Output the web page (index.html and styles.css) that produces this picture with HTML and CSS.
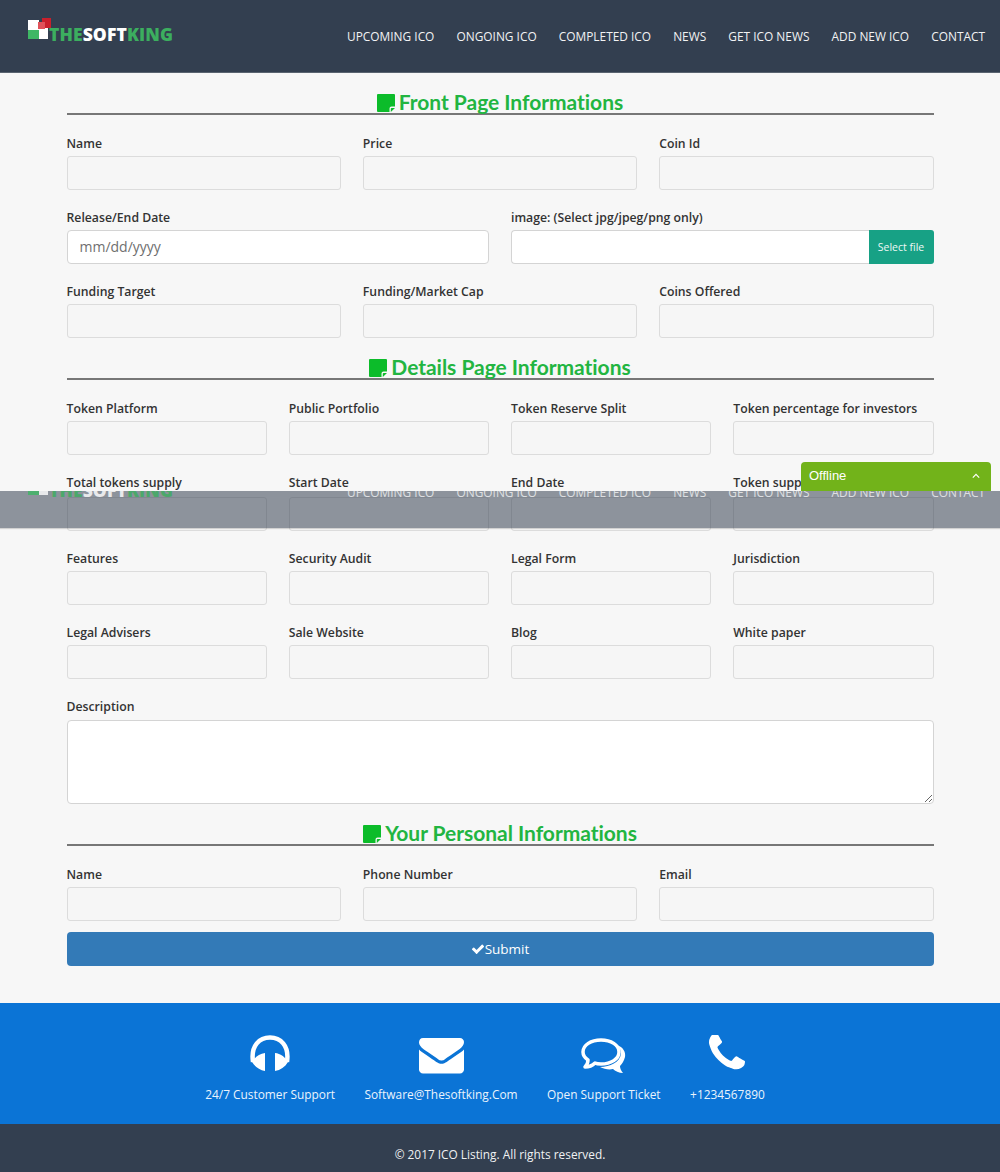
FILE: index.html
```html
<!DOCTYPE html>
<html lang="en">
<head>
<meta charset="utf-8">
<title>Add New ICO</title>
<link rel="stylesheet" href="styles.css">
</head>
<body>
<svg class="defs" width="0" height="0" aria-hidden="true">
  <symbol id="note" viewBox="0 0 18 18"><path d="M1 0h16a1 1 0 0 1 1 1v11.500h-3.500a2 2 0 0 0-2 2V18H1a1 1 0 0 1-1-1V1a1 1 0 0 1 1-1zM13.800 18v-3.200a.8.8 0 0 1 .8-.8H18z"/></symbol>
  <symbol id="mark" viewBox="0 0 24 23">
    <rect x="0" y="2" width="11" height="11" fill="#fff"/>
    <rect x="0" y="12" width="11" height="9" fill="#3fb765"/>
    <rect x="11" y="10" width="9" height="11" fill="#fff"/>
    <rect x="14" y="0" width="9" height="10" fill="#c9202c"/>
    <rect x="10" y="4" width="7" height="7" fill="#e0525a"/>
  </symbol>
</svg>

<header class="topbar">
  <a class="logo" href="#"><svg class="logo-mark"><use href="#mark"/></svg><span class="logo-text"><span class="g">THE</span>SOFT<span class="g">KING</span></span></a>
  <nav class="menu">
    <a href="#">Upcoming ICO</a><a href="#">Ongoing ICO</a><a href="#">Completed ICO</a><a href="#">News</a><a href="#">Get ICO News</a><a href="#">Add New ICO</a><a href="#">Contact</a>
  </nav>
</header>

<main class="page">
  <section class="block">
    <h2 class="block-title"><svg class="note"><use href="#note"/></svg><span>Front Page Informations</span></h2>
    <div class="rows">
      <div class="grid c3">
        <div class="field"><label>Name</label><input class="inp"></div>
        <div class="field"><label>Price</label><input class="inp"></div>
        <div class="field"><label>Coin Id</label><input class="inp"></div>
      </div>
      <div class="grid c2">
        <div class="field"><label>Release/End Date</label><input class="inp white date" placeholder="mm/dd/yyyy"></div>
        <div class="field"><label>image: (Select jpg/jpeg/png only)</label>
          <div class="file"><input class="inp white"><button class="file-btn" type="button">Select file</button></div>
        </div>
      </div>
      <div class="grid c3">
        <div class="field"><label>Funding Target</label><input class="inp"></div>
        <div class="field"><label>Funding/Market Cap</label><input class="inp"></div>
        <div class="field"><label>Coins Offered</label><input class="inp"></div>
      </div>
    </div>
  </section>

  <section class="block">
    <h2 class="block-title"><svg class="note"><use href="#note"/></svg><span>Details Page Informations</span></h2>
    <div class="rows">
      <div class="grid c4">
        <div class="field"><label>Token Platform</label><input class="inp"></div>
        <div class="field"><label>Public Portfolio</label><input class="inp"></div>
        <div class="field"><label>Token Reserve Split</label><input class="inp"></div>
        <div class="field"><label>Token percentage for investors</label><input class="inp"></div>
      </div>
      <div class="grid c4 loose">
        <div class="field"><label>Total tokens supply</label><input class="inp"></div>
        <div class="field"><label>Start Date</label><input class="inp"></div>
        <div class="field"><label>End Date</label><input class="inp"></div>
        <div class="field"><label>Token supply</label><input class="inp"></div>
      </div>
      <div class="grid c4">
        <div class="field"><label>Features</label><input class="inp"></div>
        <div class="field"><label>Security Audit</label><input class="inp"></div>
        <div class="field"><label>Legal Form</label><input class="inp"></div>
        <div class="field"><label>Jurisdiction</label><input class="inp"></div>
      </div>
      <div class="grid c4">
        <div class="field"><label>Legal Advisers</label><input class="inp"></div>
        <div class="field"><label>Sale Website</label><input class="inp"></div>
        <div class="field"><label>Blog</label><input class="inp"></div>
        <div class="field"><label>White paper</label><input class="inp"></div>
      </div>
      <div class="field"><label class="desc-label">Description</label><textarea class="desc"></textarea></div>
    </div>
  </section>

  <section class="block">
    <h2 class="block-title"><svg class="note"><use href="#note"/></svg><span>Your Personal Informations</span></h2>
    <div class="grid c3">
      <div class="field"><label>Name</label><input class="inp"></div>
      <div class="field"><label>Phone Number</label><input class="inp"></div>
      <div class="field"><label>Email</label><input class="inp"></div>
    </div>
    <button class="submit" type="button"><svg class="check" viewBox="0 0 1792 1792"><path fill="currentColor" d="M1671 566q0 40-28 68l-724 724-136 136q-28 28-68 28t-68-28l-136-136-362-362q-28-28-28-68t28-68l136-136q28-28 68-28t68 28l294 295 656-657q28-28 68-28t68 28l136 136q28 28 28 68z"/></svg>Submit</button>
  </section>
</main>

<section class="contact">
  <div class="contact-item">
    <svg class="ci ci-head" viewBox="0 0 42 36"><path d="M4 27C1.500 10 11 2.500 21 2.500S40.500 10 38 27" fill="none" stroke="#fff" stroke-width="4.500"/><path d="M16 18V36C10.500 35 6 32 3 27c3-5 7.500-8.500 13-9zM26 18V36C31.500 35 36 32 39 27c-3-5-7.500-8.500-13-9z" fill="#fff"/></svg>
    <span>24/7 Customer Support</span>
  </div>
  <div class="contact-item">
    <svg class="ci ci-mail" viewBox="0 0 1792 1430"><path fill="#fff" transform="translate(0 -256)" d="M1792 710v794q0 66-47 113t-113 47h-1472q-66 0-113-47t-47-113v-794q44 49 101 87 362 246 497 345 57 42 92.5 65.500t94.500 48 110 24.500h2q51 0 110-24.500t94.500-48 92.500-65.500q170-123 498-345 57-39 100-87zm0-294q0 79-49 151t-122 123q-376 261-468 325-10 7-42.500 30.500t-54 38-52 32.500-57.500 27-50 9h-2q-23 0-50-9t-57.500-27-52-32.500-54-38-42.500-30.500q-91-64-262-182.500t-205-142.500q-62-42-117-115.500t-55-136.500q0-78 41.500-130t118.500-52h1472q65 0 112.500 47t47.500 113z"/></svg>
    <span>Software@Thesoftking.Com</span>
  </div>
  <div class="contact-item">
    <svg class="ci ci-chat" viewBox="0 0 46 36"><path d="M36 7c6 2 9 7 8 12-1 4-3 7-5 9 0 2 1 5 3 7-4 0-8-2-10-4-4 1-9 0-13-2 10 0 20-5 21-13 0-3-1-6-4-9z" fill="#fff"/><path d="M20 2c10 0 18 5 18 12s-8 12-18 12c-2 0-4 0-6-1-2 2-6 4-10 4 2-2 3-4 3-7-3-2-5-5-5-8C2 7 10 2 20 2z" fill="none" stroke="#fff" stroke-width="3.500" stroke-linejoin="round"/></svg>
    <span>Open Support Ticket</span>
  </div>
  <div class="contact-item">
    <svg class="ci ci-phone" viewBox="192 192 1408 1408"><path fill="#fff" d="M1600 1240q0 27-10 70.500t-21 68.500q-21 50-122 106-94 51-186 51-27 0-53-3.500t-57.500-12.500-47-14.500-55.500-20.500-49-18q-98-35-175-83-127-79-264-216t-216-264q-48-77-83-175-3-9-18-49t-20.500-55.500-14.500-47-12.500-57.500-3.500-53q0-92 51-186 56-101 106-122 25-11 68.500-21t70.500-10q14 0 21 3 18 6 53 76 11 19 30 54t35 63.500 31 53.500q3 4 17.500 25t21.500 35.500 7 28.500q0 20-28.500 50t-62 55-62 53-28.500 46q0 9 5 22.500t8.500 20.500 14 24 11.500 19q76 137 174 235t235 174q2 1 19 11.500t24 14 20.500 8.500 22.500 5q18 0 46-28.500t53-62 55-62 50-28.500q14 0 28.500 7t35.500 21.500 25 17.500q25 15 53.500 31t63.500 35 54 30q70 35 76 53 3 7 3 21z"/></svg>
    <span>+1234567890</span>
  </div>
</section>

<footer class="copy">© 2017 ICO Listing. All rights reserved.</footer>

<div class="chat-tab"><span>Offline</span><svg class="chev" viewBox="0 0 10 6"><path d="M1 5l4-4 4 4" fill="none" stroke="#fff" stroke-width="1.500"/></svg></div>

<div class="sticky-ghost" aria-hidden="true">
  <div class="topbar ghost-bar">
    <a class="logo" href="#"><svg class="logo-mark"><use href="#mark"/></svg><span class="logo-text"><span class="g">THE</span>SOFT<span class="g">KING</span></span></a>
    <nav class="menu">
      <a href="#">Upcoming ICO</a><a href="#">Ongoing ICO</a><a href="#">Completed ICO</a><a href="#">News</a><a href="#">Get ICO News</a><a href="#">Add New ICO</a><a href="#">Contact</a>
    </nav>
  </div>
</div>
</body>
</html>
```

FILE: styles.css
```css
* { box-sizing: border-box; }
html, body { margin: 0; padding: 0; }
body {
  position: relative;
  background: #f7f7f7;
  font-family: "Open Sans", "Liberation Sans", sans-serif;
  color: #333;
}
a { text-decoration: none; color: inherit; }
.defs { position: absolute; }

.topbar {
  height: 73px;
  background: #333f50;
  display: flex;
  justify-content: space-between;
  padding: 0 15px 0 28px;
  border-bottom: 1px solid #5a6470;
}
.logo { display: flex; align-items: flex-start; height: 44px; color: #fff; padding-top: 18px; }
.logo-mark { width: 24px; height: 23px; margin-right: -3px; flex: none; }
.logo-text { font-weight: 800; font-size: 17.500px; line-height: 22px; margin-top: 5px; letter-spacing: .1px; }
.g { color: #3cae5f; }
.menu { display: flex; gap: 22.100px; align-items: center; height: 72px; }
.menu a { color: #f2f3f4; font-size: 11.900px; text-transform: uppercase; }

.page { padding: 17px 66.500px 37px 66.500px; }
.block { display: flow-root; margin-bottom: 17px; }
.block:last-child { margin-bottom: 0; }
.block-title {
  margin: 0 0 18px;
  height: 25px;
  border-bottom: 2px solid #777;
  display: flex;
  justify-content: center;
  align-items: flex-start;
  gap: 4px;
  font-family: Lato, "Liberation Sans", sans-serif;
  font-size: 21px;
  line-height: 24px;
  font-weight: 700;
  letter-spacing: -.03px;
  color: #22b541;
}
.note { width: 18px; height: 18px; fill: #0cbc2a; margin-top: 4px; flex: none; }

.rows { display: flex; flex-direction: column; gap: 17px; }
.grid { display: grid; column-gap: 22px; }
.c2 { grid-template-columns: repeat(2, 1fr); }
.c3 { grid-template-columns: repeat(3, 1fr); }
.c4 { grid-template-columns: repeat(4, 1fr); }

.field { display: flex; flex-direction: column; min-width: 0; }
.field label {
  display: block;
  font-size: 12.250px;
  font-weight: 600;
  line-height: 21px;
  height: 20px;
  margin-bottom: 3px;
  color: #333;
  white-space: nowrap;
}
.loose .field label { margin-bottom: 5px; }
.field .desc-label { margin-bottom: 4px; }
.inp {
  display: block;
  width: 100%;
  height: 34px;
  background: #f6f6f6;
  border: 1px solid #dcdcdc;
  border-radius: 3px;
  outline: 0;
  font-family: inherit;
  font-size: 14px;
}
.white { background: #fff; border-color: #d4d4d4; border-radius: 4px; }
.date { padding: 0 12px 2px; }
.date::placeholder { color: #6f6f6f; opacity: 1; }
.file { display: flex; }
.file .inp { border-radius: 4px 0 0 4px; border-right: 0; flex: 1; min-width: 0; }
.file-btn {
  flex: none;
  width: 65px;
  height: 34px;
  border: 0;
  border-radius: 0 3px 3px 0;
  background: #17a185;
  color: #eef8f5;
  font-family: inherit;
  font-size: 10.500px;
  padding: 0 0 1px;
}
.desc {
  display: block;
  width: 100%;
  height: 84px;
  background: #fff;
  border: 1px solid #d4d4d4;
  border-radius: 4px;
  outline: 0;
}
.submit {
  display: flex;
  align-items: center;
  justify-content: center;
  width: 100%;
  height: 34px;
  margin-top: 11px;
  border: 0;
  border-radius: 4px;
  background: #337ab7;
  color: #fff;
  font-family: inherit;
  font-size: 13.500px;
}
.check { width: 14px; height: 14px; }

.contact {
  height: 121px;
  background: #0b74d6;
  display: flex;
  justify-content: center;
  gap: 29.500px;
  padding: 31px 30px 0 0;
  color: #eaf3fc;
  font-size: 11.880px;
}
.contact-item { display: flex; flex-direction: column; align-items: center; }
.contact-item span { margin-top: auto; padding-bottom: 20px; line-height: 20px; }
.ci { display: block; }
.ci-head { width: 42px; height: 36px; margin-top: 1px; }
.ci-mail { width: 45px; height: 36px; margin-top: 4px; }
.ci-chat { width: 46px; height: 36px; margin-top: 4px; }
.ci-phone { width: 36px; height: 36px; margin-top: 1px; }

.copy {
  height: 48px;
  background: #333f50;
  color: #f0f1f2;
  font-size: 11.850px;
  line-height: 60px;
  text-align: center;
}

.chat-tab {
  position: absolute;
  left: 801px;
  top: 462px;
  width: 190px;
  height: 29px;
  background: #72b31a;
  border-radius: 4px 4px 0 0;
  color: #fff;
  font-family: "Liberation Sans", sans-serif;
  font-size: 13px;
  display: flex;
  align-items: center;
  justify-content: space-between;
  padding: 0 11px 2px 8px;
}
.chev { width: 8px; height: 6px; }

.sticky-ghost {
  position: absolute;
  left: 0;
  top: 491px;
  width: 100%;
  height: 37px;
  overflow: hidden;
  background: rgba(51, 63, 80, .54);
  box-shadow: 0 1px 1px rgba(0, 0, 0, .15);
}
.ghost-bar {
  background: transparent;
  border-bottom: 0;
  margin-top: -35px;
  opacity: .8;
}
```
